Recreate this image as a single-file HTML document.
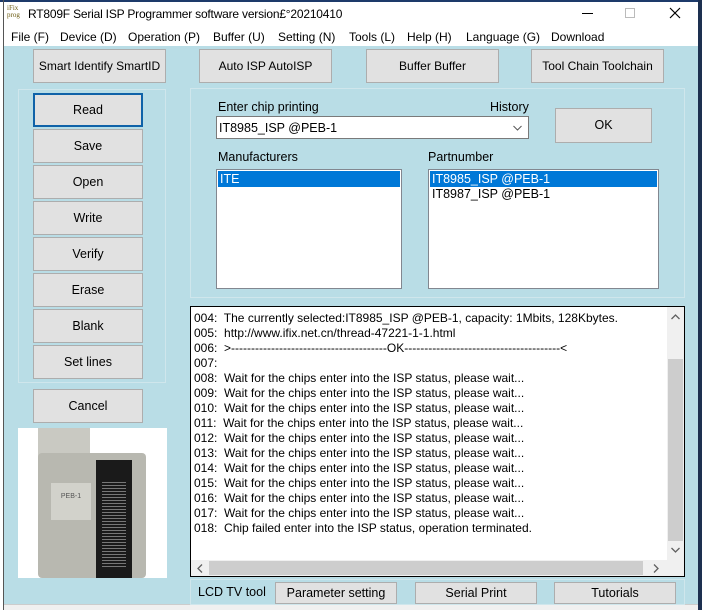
<!DOCTYPE html>
<html><head><meta charset="utf-8"><style>
*{box-sizing:border-box;margin:0;padding:0}
body{width:702px;height:610px;position:relative;overflow:hidden;background:#fff;font-family:"Liberation Sans",Arial,sans-serif;font-size:12px;color:#000}
.a{position:absolute}
.btn{position:absolute;background:#e1e1e1;border:1px solid #adadad;text-align:center;font-size:12.5px}
.grp{position:absolute;border:1px solid #cfe6ec}
.lst{position:absolute;background:#fff;border:1px solid #828790}
.sel{background:#0078d7;color:#fff}
.log div{height:15px;line-height:15px;white-space:nowrap;font-size:12px}
.m{position:absolute;top:30px;font-size:12px}
</style></head><body>
<div class="a" style="left:0;top:0;width:702px;height:2px;background:#1d3a6a"></div>
<div class="a" style="left:0;top:2px;width:4px;height:608px;background:#fff"></div>
<div class="a" style="left:4px;top:2px;width:694px;height:44px;background:#fff"></div>
<div class="a" style="left:698px;top:0;width:4px;height:610px;background:#1d3050"></div>
<div class="a" style="left:3px;top:0;width:1px;height:610px;background:#555"></div>
<div class="a" style="left:7px;top:5px;font-family:'Liberation Serif',serif;font-size:7px;line-height:7px;color:#6a5a10">iFix<br>prog</div>
<div class="a" style="left:28px;top:7px;font-size:12px;letter-spacing:-0.2px">RT809F Serial ISP Programmer software version£°20210410</div>
<div class="a" style="left:582px;top:13px;width:11px;height:1px;background:#000"></div>
<div class="a" style="left:625px;top:8px;width:10px;height:10px;border:1px solid #bbb"></div>
<svg class="a" style="left:669px;top:7px" width="12" height="12"><path d="M1 1L11 11M11 1L1 11" stroke="#000" stroke-width="1.2"/></svg>
<div class="m" style="left:11px">File (F)</div>
<div class="m" style="left:60px">Device (D)</div>
<div class="m" style="left:128px">Operation (P)</div>
<div class="m" style="left:213px">Buffer (U)</div>
<div class="m" style="left:278px">Setting (N)</div>
<div class="m" style="left:349px">Tools (L)</div>
<div class="m" style="left:407px">Help (H)</div>
<div class="m" style="left:466px">Language (G)</div>
<div class="m" style="left:551px">Download</div>
<div class="a" style="left:4px;top:46px;width:694px;height:558px;background:#b9dde6"></div>
<div class="a" style="left:4px;top:604px;width:694px;height:6px;background:#f0f0f0;border-top:1px solid #ccc"></div>

<div class="btn" style="left:33px;top:49px;width:133px;height:34px;line-height:32px;font-size:12px">Smart Identify SmartID</div>
<div class="btn" style="left:199px;top:49px;width:133px;height:34px;line-height:32px;font-size:12px">Auto ISP AutoISP</div>
<div class="btn" style="left:366px;top:49px;width:133px;height:34px;line-height:32px;font-size:12px">Buffer Buffer</div>
<div class="btn" style="left:531px;top:49px;width:133px;height:34px;line-height:32px;font-size:12px">Tool Chain Toolchain</div>

<div class="grp" style="left:18px;top:89px;width:148px;height:294px"></div>
<div class="btn" style="left:33px;top:93px;width:110px;height:34px;line-height:30px;border:2px solid #0f62a8">Read</div>
<div class="btn" style="left:33px;top:129px;width:110px;height:34px;line-height:32px">Save</div>
<div class="btn" style="left:33px;top:165px;width:110px;height:34px;line-height:32px">Open</div>
<div class="btn" style="left:33px;top:201px;width:110px;height:34px;line-height:32px">Write</div>
<div class="btn" style="left:33px;top:237px;width:110px;height:34px;line-height:32px">Verify</div>
<div class="btn" style="left:33px;top:273px;width:110px;height:34px;line-height:32px">Erase</div>
<div class="btn" style="left:33px;top:309px;width:110px;height:34px;line-height:32px">Blank</div>
<div class="btn" style="left:33px;top:345px;width:110px;height:34px;line-height:32px">Set lines</div>
<div class="btn" style="left:33px;top:389px;width:110px;height:34px;line-height:32px">Cancel</div>

<div class="a" style="left:18px;top:428px;width:149px;height:150px;background:#fff">
 <div class="a" style="left:20px;top:0;width:52px;height:30px;background:#c9c9c2"></div>
 <div class="a" style="left:20px;top:25px;width:108px;height:125px;background:#b8b8b0;border-radius:4px"></div>
 <div class="a" style="left:33px;top:55px;width:40px;height:37px;background:#d2d2cb;font-size:7px;color:#555;text-align:center;padding-top:10px">PEB-1</div>
 <div class="a" style="left:78px;top:32px;width:36px;height:118px;background:#1a1a1a"></div>
 <div class="a" style="left:84px;top:52px;width:24px;height:88px;background:repeating-linear-gradient(#1a1a1a 0 2px,#777 2px 3px)"></div>
</div>

<div class="grp" style="left:190px;top:88px;width:495px;height:210px"></div>
<div class="a" style="left:218px;top:100px;font-size:12.5px">Enter chip printing</div>
<div class="a" style="left:490px;top:100px;font-size:12.5px">History</div>
<div class="a" style="left:216px;top:116px;width:313px;height:23px;background:#fff;border:1px solid #7a7a7a;padding:4px 0 0 2px;font-size:12.5px">IT8985_ISP @PEB-1<svg class="a" style="right:6px;top:8px" width="9" height="6"><path d="M0.5 1L4.5 5L8.5 1" stroke="#555" fill="none"/></svg></div>
<div class="btn" style="left:555px;top:108px;width:97px;height:35px;line-height:33px">OK</div>
<div class="a" style="left:218px;top:150px;font-size:12.5px">Manufacturers</div>
<div class="a" style="left:428px;top:150px;font-size:12.5px">Partnumber</div>
<div class="lst" style="left:216px;top:169px;width:186px;height:120px;padding:1px;font-size:12.5px"><div class="sel" style="height:16px;line-height:16px;padding-left:2px">ITE</div></div>
<div class="lst" style="left:428px;top:169px;width:231px;height:120px;padding:1px;font-size:12.5px"><div class="sel" style="height:16px;line-height:16px;padding-left:2px">IT8985_ISP @PEB-1</div><div style="height:15px;line-height:15px;padding-left:2px">IT8987_ISP @PEB-1</div></div>

<div class="a log" style="left:190px;top:306px;width:495px;height:271px;background:#fff;border:1px solid #000;padding:4px 0 0 3px">
<div>004:&nbsp; The currently selected:IT8985_ISP @PEB-1, capacity: 1Mbits, 128Kbytes.</div>
<div>005:&nbsp; http://www.ifix.net.cn/thread-47221-1-1.html</div>
<div>006:&nbsp; &gt;---------------------------------------OK---------------------------------------&lt;</div>
<div>007:</div>
<div>008:&nbsp; Wait for the chips enter into the ISP status, please wait...</div>
<div>009:&nbsp; Wait for the chips enter into the ISP status, please wait...</div>
<div>010:&nbsp; Wait for the chips enter into the ISP status, please wait...</div>
<div>011:&nbsp; Wait for the chips enter into the ISP status, please wait...</div>
<div>012:&nbsp; Wait for the chips enter into the ISP status, please wait...</div>
<div>013:&nbsp; Wait for the chips enter into the ISP status, please wait...</div>
<div>014:&nbsp; Wait for the chips enter into the ISP status, please wait...</div>
<div>015:&nbsp; Wait for the chips enter into the ISP status, please wait...</div>
<div>016:&nbsp; Wait for the chips enter into the ISP status, please wait...</div>
<div>017:&nbsp; Wait for the chips enter into the ISP status, please wait...</div>
<div>018:&nbsp; Chip failed enter into the ISP status, operation terminated.</div>
<div class="a" style="left:476px;top:0;width:17px;height:253px;background:#f0f0f0"></div>
<div class="a" style="left:477px;top:52px;width:15px;height:182px;background:#cdcdcd"></div>
<svg class="a" style="left:480px;top:7px" width="9" height="6"><path d="M0.5 5L4.5 1L8.5 5" stroke="#606060" fill="none" stroke-width="1.3"/></svg>
<svg class="a" style="left:480px;top:240px" width="9" height="6"><path d="M0.5 1L4.5 5L8.5 1" stroke="#606060" fill="none" stroke-width="1.3"/></svg>
<div class="a" style="left:0;top:253px;width:476px;height:16px;background:#f0f0f0"></div>
<div class="a" style="left:18px;top:254px;width:434px;height:14px;background:#cdcdcd"></div>
<svg class="a" style="left:6px;top:257px" width="6" height="9"><path d="M5 0.5L1 4.5L5 8.5" stroke="#606060" fill="none" stroke-width="1.3"/></svg>
<svg class="a" style="left:462px;top:257px" width="6" height="9"><path d="M1 0.5L5 4.5L1 8.5" stroke="#606060" fill="none" stroke-width="1.3"/></svg>
<div class="a" style="left:476px;top:253px;width:17px;height:16px;background:#f0f0f0"></div>
</div>

<div class="grp" style="left:190px;top:579px;width:495px;height:26px"></div>
<div class="a" style="left:198px;top:585px;font-size:12.5px">LCD TV tool</div>
<div class="btn" style="left:275px;top:582px;width:122px;height:22px;line-height:20px">Parameter setting</div>
<div class="btn" style="left:415px;top:582px;width:122px;height:22px;line-height:20px">Serial Print</div>
<div class="btn" style="left:554px;top:582px;width:122px;height:22px;line-height:20px">Tutorials</div>
</body></html>
